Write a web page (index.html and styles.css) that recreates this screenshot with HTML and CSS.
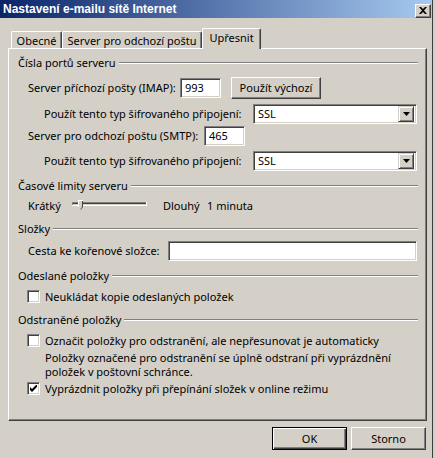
FILE: index.html
```html
<!DOCTYPE html>
<html lang="cs">
<head>
<meta charset="utf-8">
<title>Nastavení e-mailu sítě Internet</title>
<link rel="stylesheet" href="styles.css">
</head>
<body>
<div class="window">
  <div class="titlebar">
    <span class="title">Nastavení e-mailu sítě Internet</span>
    <span class="close"><svg width="8" height="7" viewBox="0 0 8 7"><path d="M0 0h2l2 2 2-2h2L5 3.5 8 7H6L4 5 2 7H0l3-3.5z" fill="#000"/></svg></span>
  </div>

  <div class="tabs">
    <div class="tab t1">Obecné</div>
    <div class="tab t2">Server pro odchozí poštu</div>
    <div class="tab active">Upřesnit</div>
  </div>

  <div class="panel">
    <div class="ghead g1"><span>Čísla portů serveru</span><i class="etch"></i></div>

    <div class="row r-imap">
      <span class="lbl w-imap">Server příchozí pošty (IMAP):</span>
      <span class="field w41">993</span>
      <span class="btn b-default">Použít výchozí</span>
    </div>
    <div class="row r-enc1 ind">
      <span class="lbl w-enc">Použít tento typ šifrovaného připojení:</span>
      <span class="select"><span class="val">SSL</span><span class="drop"><svg width="7" height="4" viewBox="0 0 7 4"><path d="M0 0h7L3.5 4z" fill="#000"/></svg></span></span>
    </div>
    <div class="row r-smtp">
      <span class="lbl w-smtp">Server pro odchozí poštu (SMTP):</span>
      <span class="field w41">465</span>
    </div>
    <div class="row r-enc2 ind">
      <span class="lbl w-enc">Použít tento typ šifrovaného připojení:</span>
      <span class="select"><span class="val">SSL</span><span class="drop"><svg width="7" height="4" viewBox="0 0 7 4"><path d="M0 0h7L3.5 4z" fill="#000"/></svg></span></span>
    </div>

    <div class="ghead g2"><span>Časové limity serveru</span><i class="etch"></i></div>
    <div class="row r-slider">
      <span class="lbl w-short">Krátký</span>
      <svg class="slider" width="76" height="12" viewBox="0 0 76 12">
        <rect x="0" y="2" width="75" height="1" fill="#808080"/>
        <rect x="0" y="2" width="1" height="4" fill="#808080"/>
        <rect x="1" y="3" width="73" height="1" fill="#404040"/>
        <rect x="1" y="4" width="73" height="1" fill="#d4d0c8"/>
        <rect x="0" y="5" width="75" height="1" fill="#fff"/>
        <rect x="74" y="2" width="1" height="4" fill="#fff"/>
        <path d="M6 0h5v7l-2.5 3L6 7z" fill="#d4d0c8"/>
        <path d="M6 0h5v1H7v6H6z" fill="#fff"/>
        <path d="M10 1h1v6l-2.5 3v-1l1.5-2z" fill="#404040"/>
      </svg>
      <span class="lbl w-long">Dlouhý</span>
      <span class="lbl">1 minuta</span>
    </div>

    <div class="ghead g3"><span>Složky</span><i class="etch"></i></div>
    <div class="row r-root">
      <span class="lbl w-root">Cesta ke kořenové složce:</span>
      <span class="field w-path"></span>
    </div>

    <div class="ghead g4"><span>Odeslané položky</span><i class="etch"></i></div>
    <div class="crow c1"><span class="cb"></span><span>Neukládat kopie odeslaných položek</span></div>

    <div class="ghead g5"><span>Odstraněné položky</span><i class="etch"></i></div>
    <div class="crow c2"><span class="cb"></span><span>Označit položky pro odstranění, ale nepřesunovat je automaticky</span></div>
    <p class="desc">Položky označené pro odstranění se úplně odstraní při vyprázdnění<br>položek v poštovní schránce.</p>
    <div class="crow c3"><span class="cb checked"><svg width="7" height="7" viewBox="0 0 7 7"><path d="M0 2l2 2 5-5v3L2 7 0 5z" fill="#000"/></svg></span><span>Vyprázdnit položky při přepínání složek v online režimu</span></div>
  </div>

  <div class="actions">
    <span class="btn b-ok">OK</span>
    <span class="btn b-cancel">Storno</span>
  </div>
</div>
</body>
</html>
```

FILE: styles.css
```css
* { box-sizing: border-box; }

body {
  margin: 0;
  background: #d4d0c8;
  font-family: "Noto Sans", "DejaVu Sans", sans-serif;
  font-size: 11px;
  line-height: 14px;
  color: #000;
}

.window {
  width: 433px;
  height: 458px;
  background: #d4d0c8;
  border-right: 1px solid #404040;
  white-space: nowrap;
}

/* title bar */
.titlebar {
  height: 18px;
  display: flex;
  justify-content: space-between;
  align-items: center;
  padding: 0 1px 0 3px;
  background: linear-gradient(to right, #0a246a, #a6caf0);
}
.title {
  color: #fff;
  font-family: "Liberation Sans", sans-serif;
  font-weight: bold;
  font-size: 12px;
}
.close {
  width: 16px;
  height: 14px;
  margin-top: 3px;
  display: flex;
  align-items: center;
  justify-content: center;
  background: #d4d0c8;
  border-top: 1px solid #fff;
  border-left: 1px solid #fff;
  border-right: 1px solid #404040;
  border-bottom: 1px solid #404040;
  box-shadow: inset -1px -1px 0 #808080;
}

/* tabs */
.tabs {
  display: flex;
  align-items: flex-end;
  height: 20px;
  margin: 10px 0 0 11px;
  position: relative;
  z-index: 2;
}
.tab {
  height: 17px;
  display: flex;
  align-items: center;
  justify-content: center;
  border-top: 1px solid #fff;
  border-left: 1px solid #fff;
  border-right: 1px solid #404040;
  box-shadow: inset -1px 0 0 #808080;
  border-radius: 2px 2px 0 0;
  padding-top: 1px;
}
.t1 { width: 51px; }
.t2 { width: 140px; }
.tab.active {
  width: 59px;
  height: 21px;
  margin-bottom: -1px;
  background: #d4d0c8;
  padding-bottom: 3px;
}

/* main panel */
.panel {
  margin-left: 8px;
  width: 419px;
  height: 373px;
  border-top: 1px solid #fff;
  border-left: 1px solid #fff;
  border-right: 1px solid #404040;
  border-bottom: 1px solid #404040;
  box-shadow: inset -1px -1px 0 #808080;
  padding: 7px 8px 0 9px;
}

.ghead {
  display: flex;
  align-items: center;
  height: 14px;
}
.etch {
  flex: 1;
  height: 2px;
  margin-left: 3px;
  border-top: 1px solid #808080;
  border-bottom: 1px solid #fff;
}

.row {
  display: flex;
  align-items: center;
  height: 20px;
  margin-left: 10px;
}
.row.ind { margin-left: 26px; }

.r-imap { height: 22px; margin-top: 7px; }
.r-enc1 { margin-top: 5px; }
.r-smtp { margin-top: 2px; }
.r-enc2 { margin-top: 5px; }
.g2 { margin-top: 8px; }
.r-slider { height: 16px; margin-top: 5px; }
.g3 { margin-top: 8px; }
.r-root { margin-top: 5px; }
.g4 { margin-top: 8px; }
.c1 { margin-top: 7px; }
.g5 { margin-top: 10px; }
.c2 { margin-top: 7px; }
.c3 { margin-top: 3px; }

.lbl { display: inline-block; }
.w-imap { width: 152px; }
.w-enc { width: 209px; }
.w-smtp { width: 176px; }
.w-root { width: 140px; }
.w-short { width: 44px; }
.w-long { width: 44px; margin-left: 15px; }

.field {
  height: 20px;
  background: #fff;
  border-top: 1px solid #808080;
  border-left: 1px solid #808080;
  border-right: 1px solid #fff;
  border-bottom: 1px solid #fff;
  box-shadow: inset 1px 1px 0 #404040, inset -1px -1px 0 #d4d0c8;
  padding: 2px 0 0 4px;
}
.w41 { width: 41px; }
.w-path { width: 249px; }

.select {
  width: 164px;
  height: 20px;
  display: flex;
  align-items: center;
  justify-content: space-between;
  background: #fff;
  border-top: 1px solid #808080;
  border-left: 1px solid #808080;
  border-right: 1px solid #fff;
  border-bottom: 1px solid #fff;
  box-shadow: inset 1px 1px 0 #404040, inset -1px -1px 0 #d4d0c8;
  padding: 1px 2px 1px 4px;
}
.drop {
  width: 16px;
  height: 16px;
  display: flex;
  align-items: center;
  justify-content: center;
  background: #d4d0c8;
  border-top: 1px solid #d4d0c8;
  border-left: 1px solid #d4d0c8;
  border-right: 1px solid #404040;
  border-bottom: 1px solid #404040;
  box-shadow: inset 1px 1px 0 #fff, inset -1px -1px 0 #808080;
}

.btn {
  display: flex;
  align-items: center;
  justify-content: center;
  background: #d4d0c8;
  border-top: 1px solid #fff;
  border-left: 1px solid #fff;
  border-right: 1px solid #404040;
  border-bottom: 1px solid #404040;
  box-shadow: inset -1px -1px 0 #808080;
}
.b-default {
  width: 90px;
  height: 22px;
  margin-left: 10px;
}

.slider { display: block; }

.crow {
  display: flex;
  align-items: center;
  height: 13px;
  margin-left: 9px;
}
.cb {
  width: 13px;
  height: 13px;
  flex: none;
  margin-right: 5px;
  background: #fff;
  border-top: 1px solid #808080;
  border-left: 1px solid #808080;
  border-right: 1px solid #fff;
  border-bottom: 1px solid #fff;
  box-shadow: inset 1px 1px 0 #404040, inset -1px -1px 0 #d4d0c8;
  display: flex;
  align-items: center;
  justify-content: center;
}

.desc {
  margin: 4px 0 0 27px;
  line-height: 14px;
}

.actions {
  display: flex;
  gap: 4px;
  margin: 6px 0 0 272px;
}
.b-ok, .b-cancel {
  width: 75px;
  height: 23px;
}
.b-ok {
  border: 1px solid #000;
  box-shadow: inset 1px 1px 0 #fff, inset -1px -1px 0 #404040, inset -2px -2px 0 #808080;
}
```
